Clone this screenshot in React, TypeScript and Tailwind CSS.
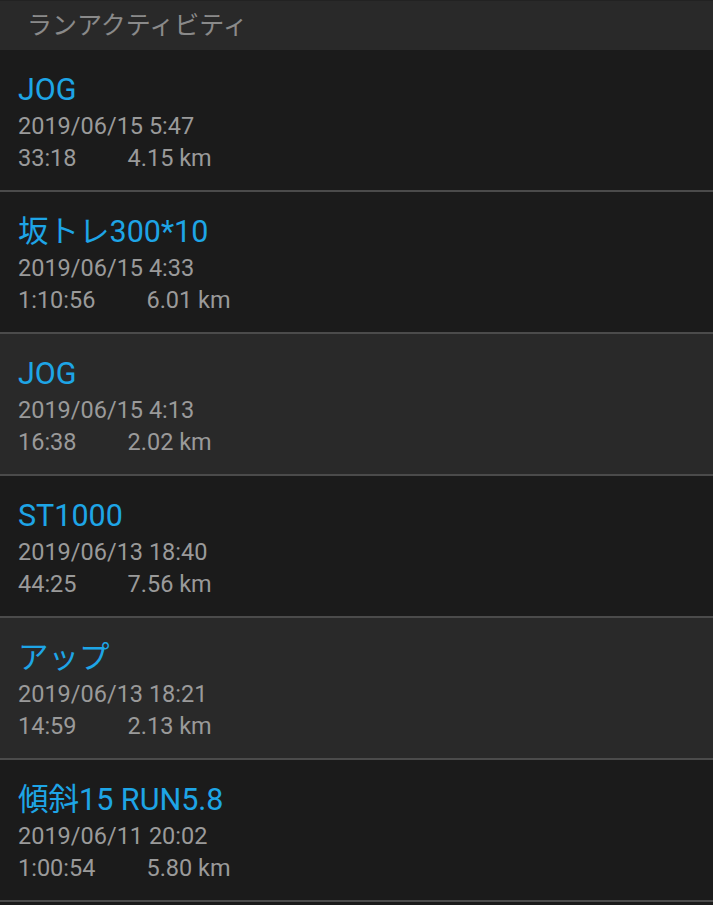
import React from "react";

const rows = [
  { t: "JOG", d: "2019/06/15 5:47", time: "33:18", km: "4.15 km", alt: false },
  { t: "坂トレ300*10", d: "2019/06/15 4:33", time: "1:10:56", km: "6.01 km", alt: false },
  { t: "JOG", d: "2019/06/15 4:13", time: "16:38", km: "2.02 km", alt: true },
  { t: "ST1000", d: "2019/06/13 18:40", time: "44:25", km: "7.56 km", alt: false },
  { t: "アップ", d: "2019/06/13 18:21", time: "14:59", km: "2.13 km", alt: true },
  { t: "傾斜15 RUN5.8", d: "2019/06/11 20:02", time: "1:00:54", km: "5.80 km", alt: false },
];

export default function App() {
  return (
    <div
      className="w-[713px] h-[905px] bg-[#1b1b1b] overflow-hidden"
      style={{ fontFamily: 'Roboto, "Noto Sans CJK JP", sans-serif' }}
    >
      <div className="h-[50px] bg-[#292929] border-t border-[#222222] flex items-center pl-[27px] text-[25px] text-[#8a8a8a]">
        ランアクティビティ
      </div>
      {rows.map((r, i) => (
        <div
          key={i}
          className={`h-[142px] border-b-2 border-[#4b4b4b] pl-[18px] pt-[20px] ${r.alt ? "bg-[#292929]" : "bg-[#1b1b1b]"}`}
        >
          <div className="text-[30.5px] leading-[40px] text-[#1ea5e6]">{r.t}</div>
          <div className="text-[23.5px] leading-[32px] text-[#9a9a9a]">{r.d}</div>
          <div className="text-[23.5px] leading-[32px] text-[#9a9a9a] flex">
            <span>{r.time}</span>
            <span className="ml-[51px]">{r.km}</span>
          </div>
        </div>
      ))}
    </div>
  );
}
